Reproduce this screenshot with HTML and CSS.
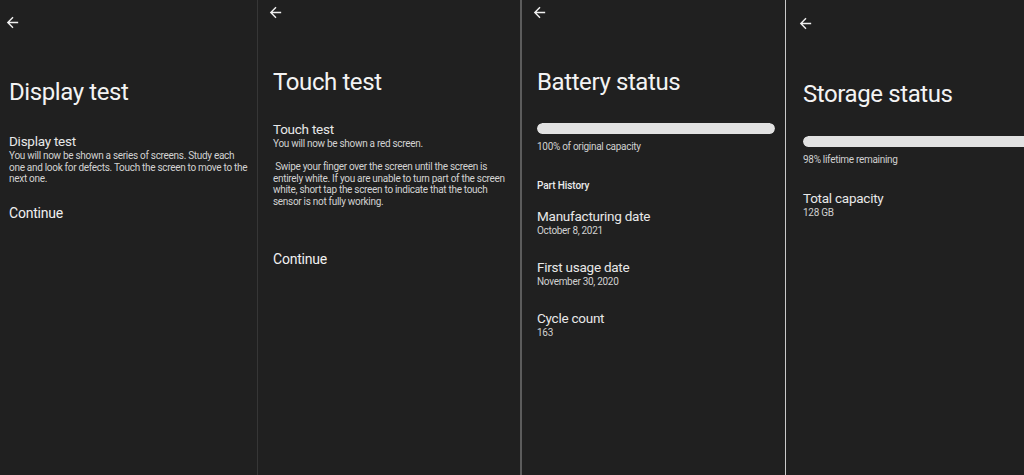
FILE: index.html
```html
<!DOCTYPE html>
<html lang="en">
<head>
    <meta charset="UTF-8">
    <meta name="viewport" content="width=device-width, initial-scale=1.0">
    <title>Pixel diagnostics</title>
    <link rel="stylesheet" href="styles.css">
</head>
<body>
    <main class="screens">
        <!-- display test -->
        <section class="screen screen-display">
            <div class="topbar">
                <svg class="back" viewBox="0 0 24 24"><path d="M20 11H7.83l5.59-5.59L12 4l-8 8 8 8 1.41-1.41L7.83 13H20v-2z"/></svg>
            </div>
            <h1 class="title">Display test</h1>
            <h2 class="item-title">Display test</h2>
            <p class="body">You will now be shown a series of screens. Study each one and look for defects. Touch the screen to move to the next one.</p>
            <p class="action">Continue</p>
        </section>

        <!-- touch test -->
        <section class="screen screen-touch">
            <div class="topbar">
                <svg class="back" viewBox="0 0 24 24"><path d="M20 11H7.83l5.59-5.59L12 4l-8 8 8 8 1.41-1.41L7.83 13H20v-2z"/></svg>
            </div>
            <h1 class="title">Touch test</h1>
            <h2 class="item-title">Touch test</h2>
            <p class="body">You will now be shown a red screen.</p>
            <p class="body body-gap">&nbsp;Swipe your finger over the screen until the screen is entirely white. If you are unable to turn part of the screen white, short tap the screen to indicate that the touch sensor is not fully working.</p>
            <p class="action">Continue</p>
        </section>

        <!-- battery -->
        <section class="screen screen-battery">
            <div class="topbar">
                <svg class="back" viewBox="0 0 24 24"><path d="M20 11H7.83l5.59-5.59L12 4l-8 8 8 8 1.41-1.41L7.83 13H20v-2z"/></svg>
            </div>
            <h1 class="title">Battery status</h1>
            <div class="meter"><div class="meter-fill" style="width: 100%"></div></div>
            <p class="caption">100% of original capacity</p>
            <p class="section-label">Part History</p>
            <div class="item">
                <h2 class="item-title">Manufacturing date</h2>
                <p class="caption">October 8, 2021</p>
            </div>
            <div class="item">
                <h2 class="item-title">First usage date</h2>
                <p class="caption">November 30, 2020</p>
            </div>
            <div class="item">
                <h2 class="item-title">Cycle count</h2>
                <p class="caption">163</p>
            </div>
        </section>

        <!-- storage -->
        <section class="screen screen-storage">
            <div class="topbar">
                <svg class="back" viewBox="0 0 24 24"><path d="M20 11H7.83l5.59-5.59L12 4l-8 8 8 8 1.41-1.41L7.83 13H20v-2z"/></svg>
            </div>
            <h1 class="title">Storage status</h1>
            <div class="meter"><div class="meter-fill" style="width: 98%"></div></div>
            <p class="caption">98% lifetime remaining</p>
            <div class="item">
                <h2 class="item-title">Total capacity</h2>
                <p class="caption">128 GB</p>
            </div>
        </section>
    </main>
</body>
</html>
```
FILE: styles.css
```css
body {
    margin: 0;
    background-color: #202020;
    font-family: Roboto, "Liberation Sans", sans-serif;
    color: #f1f1f1;
    overflow: hidden;
}
.screens {
    display: flex;
    height: 475px;
}
.screen {
    flex: none;
    box-sizing: border-box;
    height: 100%;
    background-color: #202020;
}
.screen-display {
    width: 258px;
    padding: 0 7px 0 9px;
    border-right: 1px solid #363636;
}
.screen-touch {
    width: 264px;
    padding: 0 10px 0 15px;
    border-right: 2px solid #5c5c5c;
}
.screen-battery {
    width: 264px;
    padding: 0 10px 0 15px;
    border-right: 1px solid #c9c9c9;
}
.screen-storage {
    flex: 1;
    padding: 0 0 0 17px;
    overflow: hidden;
}

.topbar {
    height: 17px;
}
.back {
    display: block;
    width: 17px;
    height: 17px;
    fill: #f1f1f1;
}
.screen-display .topbar { margin: 14px 0 0 -5px; }
.screen-touch .topbar { margin: 4px 0 0 -6px; }
.screen-battery .topbar { margin: 4px 0 0 -6px; }
.screen-storage .topbar { margin: 15px 0 0 -6px; }

.title {
    margin: 47px 0 0;
    font-size: 24px;
    line-height: 28px;
    font-weight: 400;
    letter-spacing: -0.4px;
    color: #f3f3f3;
}
.screen-storage .title { margin-top: 48px; }

.item-title {
    margin: 0;
    font-size: 13.5px;
    line-height: 17px;
    font-weight: 400;
    letter-spacing: -0.25px;
    color: #e8e8e8;
}
.screen-display .item-title { margin-top: 27px; }
.screen-touch .item-title { margin-top: 25px; }

.body {
    margin: 0;
    font-size: 10px;
    line-height: 11.7px;
    letter-spacing: -0.3px;
    color: #d2d2d2;
}
.screen-touch .body { line-height: 11.5px; }
.body-gap { margin-top: 11.5px; }

.action {
    margin: 20px 0 0;
    font-size: 14px;
    line-height: 17px;
    letter-spacing: -0.2px;
    color: #f1f1f1;
}
.screen-touch .action { margin-top: 44px; }

.meter {
    margin-top: 27px;
    height: 11px;
    border-radius: 6px;
    background-color: #3a3a3a;
    overflow: hidden;
}
.screen-storage .meter {
    margin-top: 28px;
    margin-right: -20px;
}
.meter-fill {
    height: 100%;
    border-radius: 6px;
    background-color: #e2e2e2;
}

.caption {
    margin: 0;
    font-size: 10px;
    line-height: 11.7px;
    letter-spacing: -0.3px;
    color: #d0d0d0;
}
.meter + .caption { margin-top: 7px; }

.section-label {
    margin: 27px 0 0;
    font-size: 10px;
    line-height: 11.7px;
    font-weight: 500;
    letter-spacing: -0.1px;
    color: #ececec;
}
.item { margin-top: 22px; }
.section-label + .item { margin-top: 17px; }
.screen-storage .item { margin-top: 24px; }
```
